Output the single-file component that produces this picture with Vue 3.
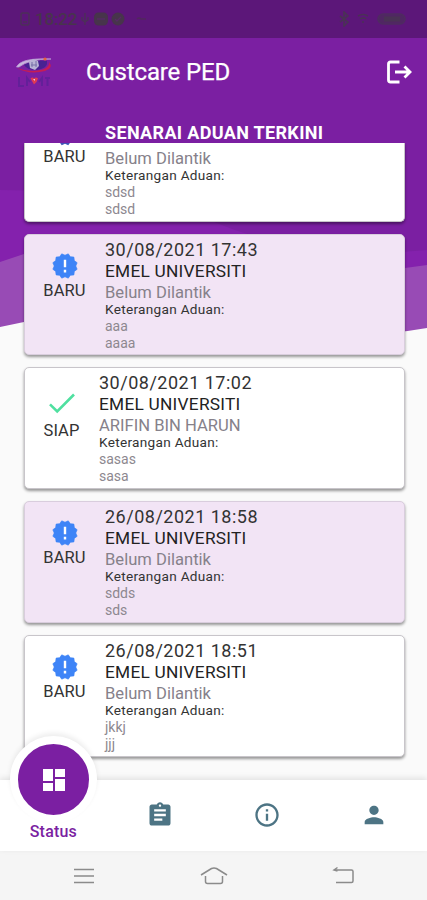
<script setup>
const cards = [
  { person: 'Belum Dilantik', notes: ['sdsd', 'sdsd'], status: 'BARU', partial: true },
  { date: '30/08/2021 17:43', title: 'EMEL UNIVERSITI', person: 'Belum Dilantik', notes: ['aaa', 'aaaa'], status: 'BARU', tint: true },
  { date: '30/08/2021 17:02', title: 'EMEL UNIVERSITI', person: 'ARIFIN BIN HARUN', notes: ['sasas', 'sasa'], status: 'SIAP' },
  { date: '26/08/2021 18:58', title: 'EMEL UNIVERSITI', person: 'Belum Dilantik', notes: ['sdds', 'sds'], status: 'BARU', tint: true },
  { date: '26/08/2021 18:51', title: 'EMEL UNIVERSITI', person: 'Belum Dilantik', notes: ['jkkj', 'jjj'], status: 'BARU' },
]
const badge = Array.from({ length: 24 }, (_, i) => {
  const r = i % 2 ? 10.8 : 12.6
  const a = ((i + 1) * Math.PI) / 12
  return `${(13 + r * Math.sin(a)).toFixed(2)},${(13 - r * Math.cos(a)).toFixed(2)}`
}).join(' ')
</script>

<template>
  <div class="screen">
    <svg class="backdrop" width="427" height="340" viewBox="0 0 427 340">
      <path d="M0 0H427V328Q410 331 390 333Q300 338 214 318Q100 306 24 322L0 327Z" fill="#984bb5" />
      <path d="M0 0H427V265L405 268Q320 280 214 250Q100 235 24 254L0 262Z" fill="#8421ad" />
      <path d="M0 0H427V250Q310 262 214 222Q110 190 0 190Z" fill="#7b1fa2" />
    </svg>

    <div class="statusbar">
      <svg width="10" height="14" viewBox="0 0 10 14" fill="none" stroke="#4c3058" stroke-width="1.5"><rect x="1" y="1" width="8" height="12" rx="1.5" /><path d="M3 10h4" /></svg>
      <span class="clock">18:22</span>
      <svg class="sb-left" width="72" height="16" viewBox="0 0 72 16" fill="#47344b">
        <path d="M5 2v12M2 6v3l3 2 3-2V6" fill="none" stroke="#4b3255" stroke-width="1.3" />
        <rect x="14" y="1.5" width="14" height="13" rx="4.5" />
        <circle cx="38" cy="8" r="6.5" />
        <path d="M17 8h8M35 8l2 2 4-4" fill="none" stroke="#562a65" stroke-width="1.3" />
        <path d="M57 8q2-2 4 0h5" fill="none" stroke="#50295c" stroke-width="1.3" />
      </svg>
      <svg class="sb-right" width="70" height="16" viewBox="0 0 70 16" fill="none" stroke="#4a3255" stroke-width="1.6">
        <path d="M1 5l8 6-4 4V1l4 4-8 6" />
        <path d="M19 5q5-3 10 0M21 8q3-2 6 0M23 11h2" />
        <rect x="39" y="3" width="27" height="10" rx="5" fill="#502663" stroke="#4f2b61" />
        <path d="M45 8h16" stroke-width="5" />
      </svg>
    </div>

    <header class="appbar">
      <svg class="logo" width="42" height="34" viewBox="0 0 42 34">
        <path d="M9 10Q17 4 32 6Q33 12 26 14Q14 17 9 10Z" fill="#482292" />
        <path d="M1.5 12Q6 2.5 36 4Q14 4 4 12Z" fill="#c9b6df" stroke="#b99bd3" stroke-width=".8" />
        <path d="M2 13Q15 18 28 14.5Q35 12 34 7Q39 13 30 16Q14 20 2 13Z" fill="#c51d55" />
        <path d="M14 7l4-3 5 2 1 5-4 4-5-2Z" fill="#b9b4d6" />
        <path d="M17 7v5M21 6v6M16 10h6" stroke="#7770a8" />
        <circle cx="30" cy="4" r="1.6" fill="#e8603b" />
        <path d="M4 22v9h5M12 31v-8l3 4M24 27l3-4v8M30 23h5M32.5 23v8" fill="none" stroke="#632099" stroke-width="2" />
        <path d="M15.5 23.5q2-2 3.5 0q2-2 4 0q-1 4-4 6Z" fill="#df3a54" />
        <path d="M18 24h2v2z" fill="#ead0e0" />
      </svg>
      <h1>Custcare PED</h1>
      <svg class="logout" width="26" height="24" viewBox="0 0 26 24" fill="none" stroke="#fff" stroke-width="2.8">
        <path d="M13.5 2H4.5Q2.5 2 2.5 4V20Q2.5 22 4.5 22H13.5" /><path d="M9 12H24M18.5 6.5L24 12L18.5 17.5" />
      </svg>
    </header>

    <h2>SENARAI ADUAN TERKINI</h2>

    <main class="list">
      <article v-for="(c, i) in cards" :key="i" class="card" :class="{ tint: c.tint, done: c.status === 'SIAP', partial: c.partial }">
        <div class="state">
          <svg v-if="c.partial" width="26" height="3" viewBox="0 23 26 3">
            <polygon :points="badge" fill="#3e54b7" />
          </svg>
          <svg v-else-if="c.status === 'BARU'" width="26" height="26" viewBox="0 0 26 26">
            <polygon :points="badge" fill="#3e84f7" stroke="#3e84f7" stroke-width=".6" stroke-linejoin="round" />
            <path d="M13 6.7v7.5M13 16.8v2.6" stroke="#fff" stroke-width="2.4" />
          </svg>
          <svg v-else width="26" height="26" viewBox="0 0 26 26"><path d="M1 14.3L8.2 21.5L25 4.5" fill="none" stroke="#4fe0a0" stroke-width="2.6" /></svg>
          <span>{{ c.status }}</span>
        </div>
        <div class="info">
          <div v-if="c.date" class="date">{{ c.date }}</div>
          <div v-if="c.title" class="title">{{ c.title }}</div>
          <div class="person">{{ c.person }}</div>
          <div class="label">Keterangan Aduan:</div>
          <div v-for="(n, k) in c.notes" :key="k" class="note">{{ n }}</div>
        </div>
      </article>
    </main>

    <nav class="tabs">
      <div class="tab active">
        <div class="bubble">
          <svg width="24" height="24" viewBox="0 0 24 24" fill="#fff"><path d="M1 1h10v12H1zM13 1h10v8H13zM1 15h10v8H1zM13 11h10v12H13z" /></svg>
        </div>
        <span>Status</span>
      </div>
      <div class="tab">
        <svg width="28" height="28" viewBox="0 0 24 24" fill="#4d7484"><path d="M19 3h-4.18C14.4 1.84 13.3 1 12 1s-2.4.84-2.82 2H5c-1.1 0-2 .9-2 2v14c0 1.1.9 2 2 2h14c1.1 0 2-.9 2-2V5c0-1.1-.9-2-2-2zm-7 0c.55 0 1 .45 1 1s-.45 1-1 1-1-.45-1-1 .45-1 1-1zm2 14H7v-2h7v2zm3-4H7v-2h10v2zm0-4H7V7h10v2z" /></svg>
      </div>
      <div class="tab">
        <svg width="28" height="28" viewBox="0 0 24 24" fill="#4d7484"><path d="M11 7h2v2h-2zm0 4h2v6h-2zm1-9C6.48 2 2 6.48 2 12s4.48 10 10 10 10-4.48 10-10S17.52 2 12 2zm0 18c-4.41 0-8-3.59-8-8s3.59-8 8-8 8 3.59 8 8-3.59 8-8 8z" /></svg>
      </div>
      <div class="tab">
        <svg width="28" height="28" viewBox="0 0 24 24" fill="#4d7484"><path d="M12 12c2.21 0 4-1.79 4-4s-1.79-4-4-4-4 1.79-4 4 1.79 4 4 4zm0 2c-2.67 0-8 1.34-8 4v2h16v-2c0-2.66-5.33-4-8-4z" /></svg>
      </div>
    </nav>

    <footer class="sysnav">
      <svg width="28" height="20" viewBox="0 0 28 20"><path d="M4 3.5h20M4 10h20M4 16.5h20" /></svg>
      <svg width="28" height="20" viewBox="0 0 28 20"><path d="M1 9L11.5 2.5Q14 1.3 16.5 2.5L27 9M5.5 10V15.5Q5.5 17.5 7.5 17.5H20.5Q22.5 17.5 22.5 15.5V10" /></svg>
      <svg width="28" height="20" viewBox="0 0 28 20"><path d="M4 4H21.5Q23 4 23 5.5V15Q23 16.5 21.5 16.5H6M7.5 1.5L4 4L7.5 5" /></svg>
    </footer>
  </div>
</template>

<style>
body { margin: 0; }
</style>

<style scoped>
.screen { width: 427px; height: 900px; position: relative; overflow: hidden; display: flex; flex-direction: column; background: #fafafa; font-family: Roboto, sans-serif; isolation: isolate; }
.backdrop { position: absolute; left: 0; top: 0; z-index: -1; }
.statusbar { height: 38px; flex: none; box-sizing: border-box; padding: 0 18px 0 20px; background: #5c1779; display: flex; align-items: center; }
.clock { color: #48344d; font-size: 17px; line-height: 20px; font-weight: 500; margin-left: 5px; width: 40px; letter-spacing: -.2px; }
.sb-left { margin-left: 5px; }
.sb-right { margin-left: auto; }
.appbar { height: 68px; flex: none; box-sizing: border-box; padding: 0 15px; display: flex; align-items: center; }
h1 { margin: 0 0 0 29px; color: #fff; font-size: 24px; line-height: 28px; font-weight: 400; letter-spacing: -.15px; -webkit-text-stroke: .25px #fff; }
.logout { margin-left: auto; }
h2 { margin: 0; height: 37px; flex: none; box-sizing: border-box; padding: 16px 0 0 105px; color: #fff; font-size: 18px; line-height: 22px; font-weight: 700; letter-spacing: .34px; white-space: nowrap; }
.list { height: 637px; flex: none; overflow: hidden; padding: 0 22px 0 24px; box-sizing: border-box; display: flex; flex-direction: column; gap: 12px; }
.card { height: 121.8px; flex: none; box-sizing: border-box; border: 1px solid #c8c5ca; border-radius: 5px; background: #fff; box-shadow: 0 2px 3px rgba(0,0,0,.4); display: flex; padding: 4px 0 0 18px; }
.tint { background: #f2e4f5; border-color: #d9cddd; }
.state { width: 43px; flex: none; margin-right: 19px; display: flex; flex-direction: column; align-items: center; padding-top: 14px; color: #333; font-size: 16.5px; line-height: 20px; letter-spacing: .1px; }
.state span { margin-top: 2px; }
.done .state { width: 37px; padding-top: 18px; }
.done .state span { margin-top: 5px; }
.partial { height: 78.6px; border-top: 0; border-radius: 0 0 5px 5px; padding-top: 0; }
.partial .state { padding-top: 0; }
.partial .state span { margin-top: 1px; }
.partial .info { padding-top: 4.5px; }
.info { color: #333; white-space: nowrap; }
.date { font-size: 18px; line-height: 22px; letter-spacing: .5px; }
.title { font-size: 17.3px; line-height: 21px; letter-spacing: .25px; color: #222; }
.person { font-size: 16.6px; line-height: 21px; color: #86818a; }
.label { font-size: 13.6px; line-height: 13px; letter-spacing: .3px; padding-bottom: 2px; }
.note { font-size: 14px; line-height: 17px; color: #8d888f; }
.tabs { height: 71px; flex: none; background: #fff; box-shadow: 0 -2px 6px rgba(0,0,0,.1); display: grid; grid-template-columns: repeat(4, 1fr); position: relative; }
.tab { display: flex; align-items: center; justify-content: center; padding-bottom: 1px; }
.tab.active { flex-direction: column; justify-content: flex-end; color: #7b1fa2; font-size: 16px; line-height: 18px; letter-spacing: .2px; font-weight: 500; padding-bottom: 10px; }
.bubble { position: absolute; left: 10px; top: -44px; width: 71px; height: 71px; border: 8px solid #fff; border-radius: 50%; background: #7b1fa2; display: flex; align-items: center; justify-content: center; box-shadow: 0 -3px 5px rgba(0,0,0,.07); }
.sysnav { height: 49px; flex: none; background: #f5f5f5; display: flex; justify-content: center; gap: 102px; align-items: center; }
.sysnav path { fill: none; stroke: #8b8b8b; stroke-width: 1.5; }
</style>
